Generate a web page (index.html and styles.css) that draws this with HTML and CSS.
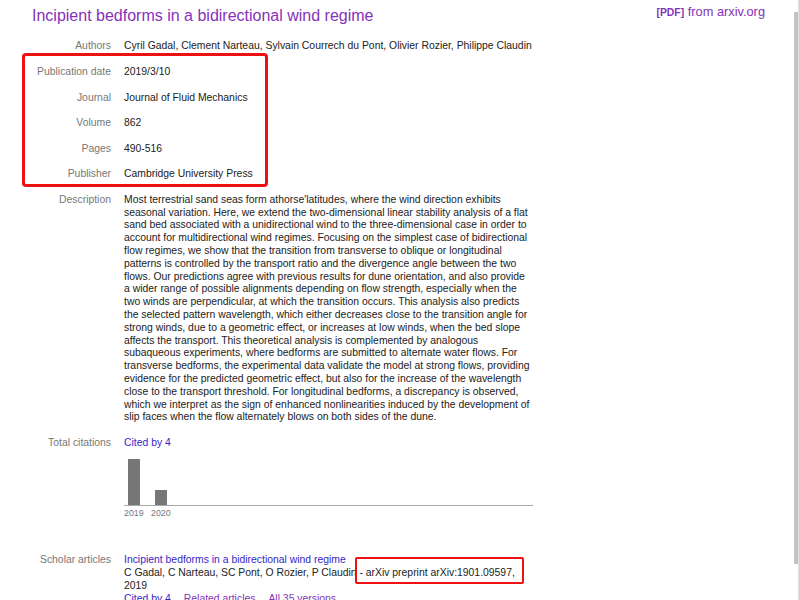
FILE: index.html
```html
<!DOCTYPE html>
<html lang="en">
<head>
<meta charset="utf-8">
<title>Incipient bedforms in a bidirectional wind regime</title>
<link rel="stylesheet" href="styles.css">
</head>
<body>
<div class="page">
  <div class="header">
    <a class="title" href="#">Incipient bedforms in a bidirectional wind regime</a>
    <a class="pdf" href="#"><span class="pdf-tag">[PDF]</span> from arxiv.org</a>
  </div>

  <div class="table">
    <div class="row"><div class="label">Authors</div><div class="value">Cyril Gadal, Clement Narteau, Sylvain Courrech du Pont, Olivier Rozier, Philippe Claudin</div></div>
    <div class="row"><div class="label">Publication date</div><div class="value">2019/3/10</div></div>
    <div class="row"><div class="label">Journal</div><div class="value">Journal of Fluid Mechanics</div></div>
    <div class="row"><div class="label">Volume</div><div class="value">862</div></div>
    <div class="row"><div class="label">Pages</div><div class="value">490-516</div></div>
    <div class="row"><div class="label">Publisher</div><div class="value">Cambridge University Press</div></div>
    <div class="row"><div class="label">Description</div><div class="value">Most terrestrial sand seas form athorse'latitudes, where the wind direction exhibits seasonal variation. Here, we extend the two-dimensional linear stability analysis of a flat sand bed associated with a unidirectional wind to the three-dimensional case in order to account for multidirectional wind regimes. Focusing on the simplest case of bidirectional flow regimes, we show that the transition from transverse to oblique or longitudinal patterns is controlled by the transport ratio and the divergence angle between the two flows. Our predictions agree with previous results for dune orientation, and also provide a wider range of possible alignments depending on flow strength, especially when the two winds are perpendicular, at which the transition occurs. This analysis also predicts the selected pattern wavelength, which either decreases close to the transition angle for strong winds, due to a geometric effect, or increases at low winds, when the bed slope affects the transport. This theoretical analysis is complemented by analogous subaqueous experiments, where bedforms are submitted to alternate water flows. For transverse bedforms, the experimental data validate the model at strong flows, providing evidence for the predicted geometric effect, but also for the increase of the wavelength close to the transport threshold. For longitudinal bedforms, a discrepancy is observed, which we interpret as the sign of enhanced nonlinearities induced by the development of slip faces when the flow alternately blows on both sides of the dune.</div></div>
    <div class="row">
      <div class="label">Total citations</div>
      <div class="value">
        <a class="link" href="#">Cited by 4</a>
        <div class="chart">
          <div class="bars">
            <div class="slot"><div class="bar" style="height:46px"></div></div>
            <div class="slot"><div class="bar" style="height:15px"></div></div>
          </div>
          <div class="years">
            <div class="slot">2019</div>
            <div class="slot">2020</div>
          </div>
        </div>
      </div>
    </div>
    <div class="row">
      <div class="label">Scholar articles</div>
      <div class="value">
        <a class="link" href="#">Incipient bedforms in a bidirectional wind regime</a><br>
        C Gadal, C Narteau, SC Pont, O Rozier, P Claudin - arXiv preprint arXiv:1901.09597, 2019<br>
        <div class="links"><a class="link" href="#">Cited by 4</a><a class="visited" href="#">Related articles</a><a class="visited" href="#">All 35 versions</a></div>
      </div>
    </div>
  </div>

  <div class="mark mark-fields"></div>
  <div class="mark mark-source"></div>
</div>
<div class="scrollbar"><div class="thumb"></div></div>
</body>
</html>
```

FILE: styles.css
```css
html, body {
  margin: 0;
  padding: 0;
  overflow: hidden;
  background: #fff;
}
body {
  font-family: "Liberation Sans", Arial, sans-serif;
  color: #222;
}
a { text-decoration: none; }

.page {
  position: relative;
  width: 799px;
  height: 600px;
}

.header {
  display: flex;
  justify-content: space-between;
  align-items: flex-start;
  padding: 4px 34px 0 32px;
}
.title {
  font-size: 16px;
  line-height: 20px;
  padding-top: 1.5px;
  color: #8433b9;
}
.pdf {
  font-size: 12.8px;
  line-height: 16px;
  color: #8433b9;
}
.pdf-tag {
  font-size: 10.4px;
  font-weight: bold;
}

.table {
  margin-top: 8.5px;
  font-size: 10.4px;
  line-height: 12.8px;
}
.row {
  display: flex;
  padding: 6.4px 0;
}
.label {
  width: 111px;
  flex: none;
  text-align: right;
  color: #777;
}
.value {
  width: 408px;
  margin-left: 13px;
}
.link { color: #3427c6; }
.visited { color: #8433b9; }

.chart {
  width: 409px;
  padding-top: 9.6px;
  padding-bottom: 22px;
}
.bars {
  display: flex;
  align-items: flex-end;
  height: 46px;
  border-bottom: 1px solid #a8a8a8;
}
.slot {
  width: 27px;
  flex: none;
}
.bar {
  width: 12px;
  margin-left: 4px;
  background: #777;
}
.years {
  display: flex;
  margin-top: 1px;
  font-size: 8.8px;
  line-height: 12px;
  color: #777;
}

.links .link, .links .visited {
  margin-right: 13px;
}

.mark {
  position: absolute;
  border-style: solid;
  border-color: #ee1111;
  box-sizing: border-box;
}
.mark-fields {
  left: 22px;
  top: 52.5px;
  width: 246px;
  height: 134px;
  border-width: 3px;
  border-radius: 4px;
}
.mark-source {
  left: 355px;
  top: 556.5px;
  width: 169px;
  height: 27px;
  border-width: 2px;
  border-radius: 2px;
}

.scrollbar {
  position: fixed;
  top: 0;
  right: 0;
  width: 5px;
  height: 600px;
  border-right: 1px solid #e0e0e0;
  box-sizing: border-box;
}
.thumb {
  margin-top: 12px;
  height: 552px;
  width: 4px;
  background: #c4c4c4;
}
```
